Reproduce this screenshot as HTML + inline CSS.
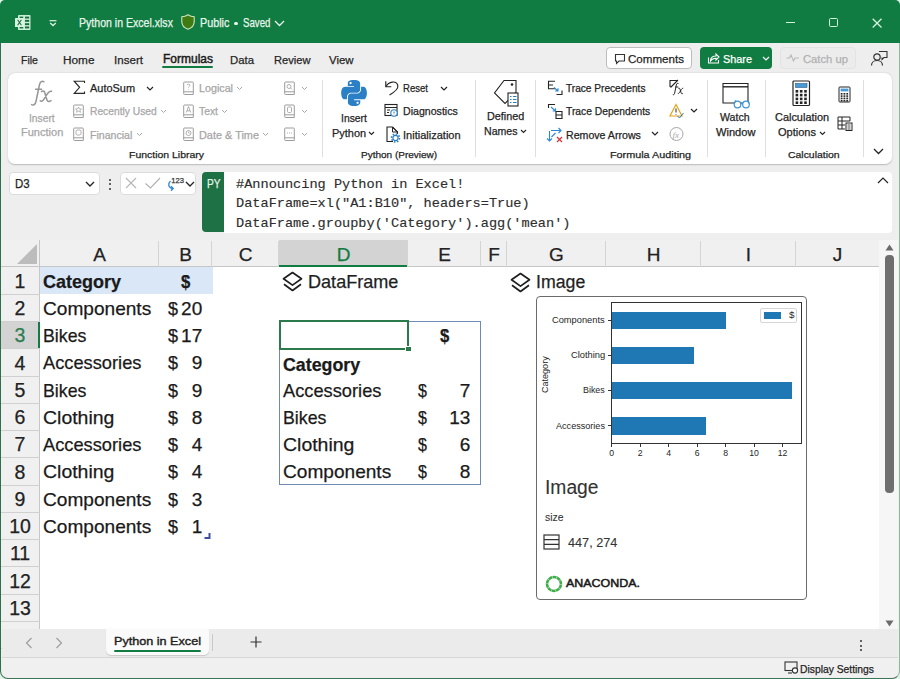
<!DOCTYPE html><html><head><meta charset="utf-8"><style>
*{margin:0;padding:0;box-sizing:border-box}
html,body{width:900px;height:679px;overflow:hidden;background:#e2f4e8;font-family:"Liberation Sans",sans-serif;color:#222}
.a{position:absolute;white-space:nowrap;-webkit-text-stroke:0.25px currentColor}
.tt{color:#e8f5ec;font-size:13px;line-height:16px}
.tab{font-size:13px;color:#242424;line-height:16px;top:51px}
.rl{font-size:12px;color:#242424;line-height:14px}
.rd{font-size:12px;color:#a6a6a6;line-height:14px}
.gl{font-size:11px;color:#242424;line-height:13px}
.c{position:absolute;font-size:19px;color:#1f1f1f;white-space:nowrap;line-height:22px}
.b{font-weight:bold}
svg{position:absolute;overflow:visible}
</style></head><body>
<div class="a" style="left:0px;top:0px;width:900px;height:679px;background:#efeeee;border-radius:5px 5px 8px 8px"></div>
<div class="a" style="left:0px;top:0px;width:900px;height:43px;background:#107c41;border-radius:5px 5px 0 0"></div>
<svg style="left:15px;top:15px" width="16" height="16" viewBox="0 0 16 16"><rect x="3" y="0" width="12.5" height="15" rx="0.8" fill="#c6efd4"/><rect x="4.6" y="1.6" width="3.6" height="1.9" fill="#1b6b42"/><rect x="10" y="1.6" width="4.2" height="1.9" fill="#1b6b42"/><rect x="4.6" y="4.9" width="3.6" height="1.9" fill="#1b6b42"/><rect x="10" y="4.9" width="4.2" height="1.9" fill="#1b6b42"/><rect x="4.6" y="8.2" width="3.6" height="1.9" fill="#1b6b42"/><rect x="10" y="8.2" width="4.2" height="1.9" fill="#1b6b42"/><rect x="4.6" y="11.499999999999998" width="3.6" height="1.9" fill="#1b6b42"/><rect x="10" y="11.499999999999998" width="4.2" height="1.9" fill="#1b6b42"/><rect x="0" y="3" width="9" height="9" rx="0.6" fill="#d9f5e2"/><path d="M2.6 4.8l3.8 5.4M6.4 4.8l-3.8 5.4" stroke="#1b6b42" stroke-width="1.1"/></svg>
<svg style="left:48.5px;top:20px" width="8" height="7" viewBox="0 0 8 7"><path d="M0.5 0.7h7" stroke="#d9f2e2" stroke-width="1.2"/><path d="M1.2 3l2.8 2.6L6.8 3" fill="none" stroke="#d9f2e2" stroke-width="1.3"/></svg>
<div class="a" style="left:79.00px;top:17.26px;font-size:12.20px;line-height:12.20px;color:#e8f5ec;transform-origin:0 0;transform:scaleX(0.8665);">Python in Excel.xlsx</div>
<svg style="left:181px;top:14px" width="14" height="16" viewBox="0 0 14 16"><path d="M7 0.8C5 2.2 3 2.8 0.8 2.8v5c0 3.8 2.6 6.2 6.2 7.4 3.6-1.2 6.2-3.6 6.2-7.4v-5C11 2.8 9 2.2 7 0.8z" fill="#3f7a12" stroke="#cfe6c0" stroke-width="1.1"/></svg>
<div class="a" style="left:199.60px;top:17.26px;font-size:12.20px;line-height:12.20px;color:#e8f5ec;transform-origin:0 0;transform:scaleX(0.8848);">Public</div>
<div class="a" style="left:234.3px;top:21.5px;width:3.4px;height:3.4px;background:#e8f5ec;border-radius:50%"></div>
<div class="a" style="left:243.00px;top:17.26px;font-size:12.20px;line-height:12.20px;color:#e8f5ec;transform-origin:0 0;transform:scaleX(0.7921);">Saved</div>
<svg style="left:274px;top:20px" width="11" height="7" viewBox="0 0 11 7"><path d="M1 1l4.5 4.5L10 1" fill="none" stroke="#e8f5ec" stroke-width="1.3"/></svg>
<div class="a" style="left:785.5px;top:21.8px;width:9.2px;height:1.3px;background:#d4f3df"></div>
<div class="a" style="left:829px;top:18.3px;width:9.4px;height:9.2px;border:1.3px solid #d4f3df;border-radius:1.5px"></div>
<svg style="left:872px;top:18px" width="10" height="10" viewBox="0 0 10 10"><path d="M0.7 0.7l8.8 8.8M9.5 0.7L0.7 9.5" stroke="#d4f3df" stroke-width="1.3"/></svg>
<div class="a" style="left:21.00px;top:53.81px;font-size:11.70px;line-height:11.70px;color:#262626;transform-origin:0 0;transform:scaleX(0.9018);">File</div>
<div class="a" style="left:62.50px;top:53.81px;font-size:11.70px;line-height:11.70px;color:#262626;transform-origin:0 0;transform:scaleX(1.0094);">Home</div>
<div class="a" style="left:113.50px;top:53.81px;font-size:11.70px;line-height:11.70px;color:#262626;transform-origin:0 0;transform:scaleX(0.9911);">Insert</div>
<div class="a" style="left:230.00px;top:53.81px;font-size:11.70px;line-height:11.70px;color:#262626;transform-origin:0 0;transform:scaleX(0.9712);">Data</div>
<div class="a" style="left:273.50px;top:53.81px;font-size:11.70px;line-height:11.70px;color:#262626;transform-origin:0 0;transform:scaleX(0.9515);">Review</div>
<div class="a" style="left:328.50px;top:53.81px;font-size:11.70px;line-height:11.70px;color:#262626;transform-origin:0 0;transform:scaleX(0.9742);">View</div>
<div class="a" style="left:162.50px;top:53.71px;font-size:11.90px;line-height:11.90px;color:#1a1a1a;transform-origin:0 0;transform:scaleX(1.0083);-webkit-text-stroke:0.45px #1a1a1a;">Formulas</div>
<div class="a" style="left:162px;top:66px;width:51px;height:2.2px;background:#107c41;border-radius:1px"></div>
<div class="a" style="left:606px;top:47px;width:86px;height:22px;background:#fff;border:1px solid #bdbdbd;border-radius:4px"></div>
<svg style="left:614px;top:53px" width="12" height="11" viewBox="0 0 12 11"><path d="M1.5 1.5h9v6.5H5L2.5 10.5V8h-1z" fill="none" stroke="#333" stroke-width="1.1"/></svg>
<div class="a" style="left:627.50px;top:52.81px;font-size:11.70px;line-height:11.70px;color:#1f1f1f;transform-origin:0 0;transform:scaleX(0.9901);">Comments</div>
<div class="a" style="left:700px;top:47px;width:72px;height:22px;background:#107c41;border-radius:4px"></div>
<svg style="left:707px;top:52px" width="13" height="12" viewBox="0 0 13 12"><path d="M1.5 5.5v5.5h10V8" fill="none" stroke="#fff" stroke-width="1.1"/><path d="M3.5 9c0-3.5 2.5-5 5.5-5V2l3 3-3 3V6.2c-2.5 0-4.5 1-5.5 2.8z" fill="none" stroke="#fff" stroke-width="1.1"/></svg>
<div class="a" style="left:722.50px;top:52.81px;font-size:11.70px;line-height:11.70px;color:#ffffff;transform-origin:0 0;transform:scaleX(0.9289);">Share</div>
<svg style="left:762px;top:56px" width="8" height="5" viewBox="0 0 8 5"><path d="M1 1l3 3 3-3" fill="none" stroke="#fff" stroke-width="1.2"/></svg>
<div class="a" style="left:780px;top:47px;width:76px;height:22px;background:#ececec;border:1px solid #e3e3e3;border-radius:4px"></div>
<svg style="left:786px;top:54px" width="14" height="8" viewBox="0 0 14 8"><path d="M0.5 4h3l1.5-3 2.5 6 1.5-3h4" fill="none" stroke="#b8b8b8" stroke-width="1.1"/></svg>
<div class="a" style="left:802.50px;top:52.81px;font-size:11.70px;line-height:11.70px;color:#b0b0b0;transform-origin:0 0;transform:scaleX(0.9610);">Catch up</div>
<svg style="left:870px;top:49px" width="18" height="18" viewBox="0 0 18 18"><circle cx="7" cy="8" r="3.2" fill="none" stroke="#333" stroke-width="1.2"/><path d="M1.5 16.5c0-3 2.5-5 5.5-5s5.5 2 5.5 5" fill="none" stroke="#333" stroke-width="1.2"/><path d="M9 2.5h8v6h-3l-2 2v-2" fill="none" stroke="#333" stroke-width="1.1"/></svg>
<div class="a" style="left:8px;top:73px;width:884px;height:91px;background:#fff;border-radius:7px;box-shadow:0 0.5px 1.5px rgba(0,0,0,.22)"></div>
<svg style="left:31px;top:80px" width="23" height="27" viewBox="0 0 23 27"><path d="M13 1.8C11 0.6 9.2 1.6 8.5 4.5L5 21.5C4.3 24.5 2.6 25.6 0.6 24.6M4.6 9.2h6" fill="none" stroke="#969696" stroke-width="1.5" stroke-linecap="round"/><path d="M10.5 11.5C12.5 10.2 13.5 11 14.3 14.5L15.8 19.5C16.5 21.8 18 22 20 20.6M20.5 11.3C19 10.8 17.5 12 15.5 15L12.8 19.3C11.8 21 10.5 21.6 9.2 20.8" fill="none" stroke="#969696" stroke-width="1.5" stroke-linecap="round"/></svg>
<div class="a" style="left:29.30px;top:112.75px;font-size:10.80px;line-height:10.80px;color:#a6a6a6;transform-origin:0 0;transform:scaleX(0.9516);">Insert</div>
<div class="a" style="left:21.00px;top:127.05px;font-size:10.80px;line-height:10.80px;color:#a6a6a6;transform-origin:0 0;transform:scaleX(1.0213);">Function</div>
<svg style="left:73px;top:80px" width="13" height="15" viewBox="0 0 13 15"><path d="M11.5 3V1.2H1.2L6.6 7.3 1.2 13.4H11.5V11.6" fill="none" stroke="#2a2a2a" stroke-width="1.15" stroke-linejoin="miter"/></svg>
<div class="a" style="left:90.00px;top:83.05px;font-size:10.80px;line-height:10.80px;color:#242424;transform-origin:0 0;transform:scaleX(1.0130);">AutoSum</div>
<svg style="left:146px;top:86px" width="8" height="5" viewBox="0 0 8 5"><path d="M1 1l3 3 3-3" fill="none" stroke="#242424" stroke-width="1.2"/></svg>
<svg style="left:73px;top:104px" width="11" height="15" viewBox="0 0 11 15"><path d="M1.5 1h8a0.8 0.8 0 0 1 .8.8V13.5H1.5a0.8 0.8 0 0 1-.8-.8V1.8a0.8 0.8 0 0 1 .8-.8z" fill="none" stroke="#9c9c9c" stroke-width="1"/><path d="M0.7 10.8h9.6" stroke="#9c9c9c" stroke-width="1"/><path d="M5.5 3l1 2h2l-1.6 1.3.6 2-2-1.2-2 1.2.6-2L2.5 5h2z" fill="none" stroke="#a6a6a6" stroke-width="0.8"/></svg>
<div class="a" style="left:90.00px;top:106.45px;font-size:10.80px;line-height:10.80px;color:#a6a6a6;transform-origin:0 0;transform:scaleX(0.9498);">Recently Used</div>
<svg style="left:160px;top:109px" width="7" height="5" viewBox="0 0 7 5"><path d="M1 1l2.5 2.5 2.5-2.5" fill="none" stroke="#a6a6a6" stroke-width="1"/></svg>
<svg style="left:73px;top:127px" width="11" height="15" viewBox="0 0 11 15"><path d="M1.5 1h8a0.8 0.8 0 0 1 .8.8V13.5H1.5a0.8 0.8 0 0 1-.8-.8V1.8a0.8 0.8 0 0 1 .8-.8z" fill="none" stroke="#9c9c9c" stroke-width="1"/><path d="M0.7 10.8h9.6" stroke="#9c9c9c" stroke-width="1"/><rect x="3" y="3" width="5" height="5" rx="1.5" fill="none" stroke="#a6a6a6" stroke-width="0.9"/></svg>
<div class="a" style="left:90.00px;top:129.75px;font-size:10.80px;line-height:10.80px;color:#a6a6a6;transform-origin:0 0;transform:scaleX(0.9787);">Financial</div>
<svg style="left:136px;top:132px" width="7" height="5" viewBox="0 0 7 5"><path d="M1 1l2.5 2.5 2.5-2.5" fill="none" stroke="#a6a6a6" stroke-width="1"/></svg>
<svg style="left:183px;top:81px" width="11" height="15" viewBox="0 0 11 15"><path d="M1.5 1h8a0.8 0.8 0 0 1 .8.8V13.5H1.5a0.8 0.8 0 0 1-.8-.8V1.8a0.8 0.8 0 0 1 .8-.8z" fill="none" stroke="#9c9c9c" stroke-width="1"/><path d="M0.7 10.8h9.6" stroke="#9c9c9c" stroke-width="1"/><path d="M4 4.2c0-1.2 3-1.2 3 0 0 1-1.5 1-1.5 2.3M5.5 8.3v.5" fill="none" stroke="#a6a6a6" stroke-width="0.9"/></svg>
<div class="a" style="left:199.30px;top:83.05px;font-size:10.80px;line-height:10.80px;color:#a6a6a6;transform-origin:0 0;transform:scaleX(0.9935);">Logical</div>
<svg style="left:236px;top:86px" width="7" height="5" viewBox="0 0 7 5"><path d="M1 1l2.5 2.5 2.5-2.5" fill="none" stroke="#a6a6a6" stroke-width="1"/></svg>
<svg style="left:183px;top:104px" width="11" height="15" viewBox="0 0 11 15"><path d="M1.5 1h8a0.8 0.8 0 0 1 .8.8V13.5H1.5a0.8 0.8 0 0 1-.8-.8V1.8a0.8 0.8 0 0 1 .8-.8z" fill="none" stroke="#9c9c9c" stroke-width="1"/><path d="M0.7 10.8h9.6" stroke="#9c9c9c" stroke-width="1"/><path d="M3.3 8.5l2.2-6 2.2 6M4 6.8h3" fill="none" stroke="#a6a6a6" stroke-width="0.9"/></svg>
<div class="a" style="left:199.30px;top:106.45px;font-size:10.80px;line-height:10.80px;color:#a6a6a6;transform-origin:0 0;transform:scaleX(0.9593);">Text</div>
<svg style="left:221px;top:109px" width="7" height="5" viewBox="0 0 7 5"><path d="M1 1l2.5 2.5 2.5-2.5" fill="none" stroke="#a6a6a6" stroke-width="1"/></svg>
<svg style="left:183px;top:127px" width="11" height="15" viewBox="0 0 11 15"><path d="M1.5 1h8a0.8 0.8 0 0 1 .8.8V13.5H1.5a0.8 0.8 0 0 1-.8-.8V1.8a0.8 0.8 0 0 1 .8-.8z" fill="none" stroke="#9c9c9c" stroke-width="1"/><path d="M0.7 10.8h9.6" stroke="#9c9c9c" stroke-width="1"/><circle cx="5.5" cy="6" r="2.5" fill="none" stroke="#a6a6a6" stroke-width="0.9"/><path d="M5.5 4.5v1.5h1" fill="none" stroke="#a6a6a6" stroke-width="0.8"/></svg>
<div class="a" style="left:199.30px;top:129.75px;font-size:10.80px;line-height:10.80px;color:#a6a6a6;transform-origin:0 0;transform:scaleX(1.0098);">Date &amp; Time</div>
<svg style="left:262px;top:132px" width="7" height="5" viewBox="0 0 7 5"><path d="M1 1l2.5 2.5 2.5-2.5" fill="none" stroke="#a6a6a6" stroke-width="1"/></svg>
<svg style="left:284px;top:81px" width="11" height="15" viewBox="0 0 11 15"><path d="M1.5 1h8a0.8 0.8 0 0 1 .8.8V13.5H1.5a0.8 0.8 0 0 1-.8-.8V1.8a0.8 0.8 0 0 1 .8-.8z" fill="none" stroke="#9c9c9c" stroke-width="1"/><path d="M0.7 10.8h9.6" stroke="#9c9c9c" stroke-width="1"/><circle cx="5" cy="5.5" r="2" fill="none" stroke="#a6a6a6" stroke-width="0.9"/><path d="M6.5 7l1.5 1.5" stroke="#a6a6a6" stroke-width="0.9"/></svg>
<svg style="left:301px;top:86px" width="7" height="5" viewBox="0 0 7 5"><path d="M1 1l2.5 2.5 2.5-2.5" fill="none" stroke="#a6a6a6" stroke-width="1"/></svg>
<svg style="left:284px;top:104px" width="11" height="15" viewBox="0 0 11 15"><path d="M1.5 1h8a0.8 0.8 0 0 1 .8.8V13.5H1.5a0.8 0.8 0 0 1-.8-.8V1.8a0.8 0.8 0 0 1 .8-.8z" fill="none" stroke="#9c9c9c" stroke-width="1"/><path d="M0.7 10.8h9.6" stroke="#9c9c9c" stroke-width="1"/><rect x="3.5" y="3" width="4" height="5.5" rx="1" fill="none" stroke="#a6a6a6" stroke-width="0.9"/></svg>
<svg style="left:301px;top:109px" width="7" height="5" viewBox="0 0 7 5"><path d="M1 1l2.5 2.5 2.5-2.5" fill="none" stroke="#a6a6a6" stroke-width="1"/></svg>
<svg style="left:284px;top:127px" width="11" height="15" viewBox="0 0 11 15"><path d="M1.5 1h8a0.8 0.8 0 0 1 .8.8V13.5H1.5a0.8 0.8 0 0 1-.8-.8V1.8a0.8 0.8 0 0 1 .8-.8z" fill="none" stroke="#9c9c9c" stroke-width="1"/><path d="M0.7 10.8h9.6" stroke="#9c9c9c" stroke-width="1"/><path d="M3 6h1M5 6h1M7 6h1" stroke="#a6a6a6" stroke-width="0.9"/></svg>
<svg style="left:301px;top:132px" width="7" height="5" viewBox="0 0 7 5"><path d="M1 1l2.5 2.5 2.5-2.5" fill="none" stroke="#a6a6a6" stroke-width="1"/></svg>
<div class="a" style="left:129.30px;top:149.93px;font-size:9.80px;line-height:9.80px;color:#242424;transform-origin:0 0;transform:scaleX(1.0675);">Function Library</div>
<div class="a" style="left:322px;top:80px;width:1px;height:77px;background:#dedede"></div>
<svg style="left:341px;top:80px" width="26" height="26" viewBox="0 0 26 26"><g transform="scale(0.236)"><path d="M54.9 0.1c-4.6 0-9 .4-12.8 1.1C30.8 3.2 28.8 7.3 28.8 15v10.1h26.3v3.4H18.9c-7.6 0-14.3 4.6-16.4 13.3-2.4 10-2.5 16.2 0 26.7 1.9 7.8 6.3 13.3 13.9 13.3h9v-12c0-8.6 7.5-16.3 16.4-16.3h26.2c7.3 0 13.1-6 13.1-13.3V15c0-7.1-6-12.5-13.1-13.7C63.5.4 59.500.1 54.9.1zM40.7 8.2c2.7 0 4.9 2.3 4.9 5s-2.2 4.9-4.9 4.9-4.9-2.2-4.9-4.9 2.2-5 4.9-5z" fill="#2b7fc4"/><path d="M85 28.6v11.700c0 9.1-7.700 16.700-16.400 16.700H42.400c-7.2 0-13.100 6.100-13.100 13.300v25c0 7.100 6.200 11.300 13.100 13.300 8.300 2.400 16.300 2.900 26.200 0 6.600-1.900 13.100-5.700 13.100-13.300V85.300H55.500v-3.300h39.300c7.600 0 10.500-5.300 13.100-13.300 2.700-8.200 2.600-16.100 0-26.700-1.900-7.600-5.500-13.300-13.100-13.300H85zM70.300 91.900c2.700 0 4.900 2.200 4.900 4.900s-2.200 5-4.900 5-4.900-2.300-4.900-5 2.200-4.900 4.900-4.900z" fill="#2b7fc4"/></g></svg>
<div class="a" style="left:341.20px;top:113.15px;font-size:10.80px;line-height:10.80px;color:#242424;transform-origin:0 0;transform:scaleX(0.9590);">Insert</div>
<div class="a" style="left:332.30px;top:128.45px;font-size:10.80px;line-height:10.80px;color:#242424;transform-origin:0 0;transform:scaleX(1.0142);">Python</div>
<svg style="left:368px;top:131px" width="7" height="5" viewBox="0 0 7 5"><path d="M1 1l2.5 2.5 2.5-2.5" fill="none" stroke="#242424" stroke-width="1.1"/></svg>
<svg style="left:384px;top:79px" width="15" height="17" viewBox="0 0 15 17"><path d="M2 7.5C4.5 2.5 12.5 1 13.8 6.5 14.5 9.5 11.5 12.5 5.5 16" fill="none" stroke="#242424" stroke-width="1.15"/><path d="M1.8 2.2v5.5h5.5" fill="none" stroke="#242424" stroke-width="1.15"/></svg>
<div class="a" style="left:403.00px;top:82.55px;font-size:10.80px;line-height:10.80px;color:#242424;transform-origin:0 0;transform:scaleX(0.8826);">Reset</div>
<svg style="left:440px;top:86px" width="8" height="5" viewBox="0 0 8 5"><path d="M1 1l3 3 3-3" fill="none" stroke="#242424" stroke-width="1.2"/></svg>
<svg style="left:384px;top:103px" width="15" height="15" viewBox="0 0 15 15"><rect x="1" y="1.5" width="12" height="11" fill="none" stroke="#242424" stroke-width="1.1"/><path d="M1 4.5h12M3 7h3M3 9.5h2" stroke="#242424" stroke-width="1"/><circle cx="10" cy="10" r="3.2" fill="#fff" stroke="#2b7fc4" stroke-width="1.1"/><path d="M10 8.5v2M10 11.5v.3" stroke="#2b7fc4" stroke-width="1"/></svg>
<div class="a" style="left:403.00px;top:106.35px;font-size:10.80px;line-height:10.80px;color:#242424;transform-origin:0 0;transform:scaleX(0.9817);">Diagnostics</div>
<svg style="left:386px;top:126px" width="14" height="17" viewBox="0 0 14 17"><path d="M6.5 1H1v14.5h6M6.5 1l5 5v2" fill="none" stroke="#242424" stroke-width="1.1"/><path d="M6.5 1v5h5z" fill="none" stroke="#242424" stroke-width="1"/><circle cx="9.5" cy="12" r="2.6" fill="none" stroke="#2b7fc4" stroke-width="1.1"/><circle cx="9.5" cy="12" r="4" fill="none" stroke="#2b7fc4" stroke-width="1.6" stroke-dasharray="1.5 1.6"/></svg>
<div class="a" style="left:403.00px;top:129.85px;font-size:10.80px;line-height:10.80px;color:#242424;transform-origin:0 0;transform:scaleX(1.0208);">Initialization</div>
<div class="a" style="left:361.00px;top:149.93px;font-size:9.80px;line-height:9.80px;color:#242424;transform-origin:0 0;transform:scaleX(1.0213);">Python (Preview)</div>
<div class="a" style="left:475px;top:80px;width:1px;height:77px;background:#dedede"></div>
<svg style="left:493px;top:79px" width="28" height="29" viewBox="0 0 28 29"><path d="M11 1.5h12v12L12 24.5 1.5 14z" fill="none" stroke="#242424" stroke-width="1.1"/><circle cx="19" cy="5.5" r="1.3" fill="#242424"/><rect x="15" y="14" width="10" height="13" fill="#fff" stroke="#242424" stroke-width="1.1"/><path d="M17 17.5h1.5M20 17.5h3.5M17 20.5h1.5M20 20.5h3.5M17 23.5h1.5M20 23.5h3.5" stroke="#2b7fc4" stroke-width="1"/></svg>
<div class="a" style="left:487.30px;top:110.65px;font-size:10.80px;line-height:10.80px;color:#242424;transform-origin:0 0;transform:scaleX(1.0021);">Defined</div>
<div class="a" style="left:483.70px;top:125.55px;font-size:10.80px;line-height:10.80px;color:#242424;transform-origin:0 0;transform:scaleX(0.9793);">Names</div>
<svg style="left:520px;top:129px" width="7" height="5" viewBox="0 0 7 5"><path d="M1 1l2.5 2.5 2.5-2.5" fill="none" stroke="#242424" stroke-width="1.1"/></svg>
<div class="a" style="left:535px;top:80px;width:1px;height:77px;background:#dedede"></div>
<svg style="left:547px;top:80px" width="17" height="17" viewBox="0 0 17 17"><path d="M8 1.2H1.5v7.5H8M1.5 5h4.5" fill="none" stroke="#242424" stroke-width="1.1"/><path d="M7 7.5l4 3.5M11 8.2v2.8H8.2" fill="none" stroke="#2b88d8" stroke-width="1.1"/><path d="M9.5 14.5h5.5V10.5" fill="none" stroke="#242424" stroke-width="1.1"/></svg>
<div class="a" style="left:565.50px;top:82.75px;font-size:10.80px;line-height:10.80px;color:#242424;transform-origin:0 0;transform:scaleX(0.9371);">Trace Precedents</div>
<svg style="left:547px;top:103px" width="17" height="17" viewBox="0 0 17 17"><path d="M1.5 5V1.5H8" fill="none" stroke="#242424" stroke-width="1.1"/><path d="M4 4l4.5 4M8.5 5.2V8H5.7" fill="none" stroke="#2b88d8" stroke-width="1.1"/><path d="M9 8.5h6v7H9zM9 12h6" fill="none" stroke="#242424" stroke-width="1.1"/></svg>
<div class="a" style="left:565.50px;top:106.35px;font-size:10.80px;line-height:10.80px;color:#242424;transform-origin:0 0;transform:scaleX(0.9520);">Trace Dependents</div>
<svg style="left:547px;top:126px" width="17" height="17" viewBox="0 0 17 17"><path d="M4 4.5h10M11.5 2l2.5 2.5-2.5 2.5M2.5 5v10M0 12.5l2.5 2.5L5 12.5M4.5 11l4-4" fill="none" stroke="#2b88d8" stroke-width="1.1"/><path d="M10 11l5 5M15 11l-5 5" stroke="#d13438" stroke-width="1.2"/></svg>
<div class="a" style="left:565.50px;top:129.85px;font-size:10.80px;line-height:10.80px;color:#242424;transform-origin:0 0;transform:scaleX(0.9827);">Remove Arrows</div>
<svg style="left:651px;top:131px" width="8" height="5" viewBox="0 0 8 5"><path d="M1 1l3 3 3-3" fill="none" stroke="#242424" stroke-width="1.2"/></svg>
<svg style="left:669px;top:79px" width="17" height="17" viewBox="0 0 17 17"><path d="M1 8V1.5h7M1.5 8.5L9 1" fill="none" stroke="#242424" stroke-width="1.1"/><path d="M9.5 4.5C8.3 4 7.6 4.6 7.3 6L5.6 14.3C5.3 15.6 4.6 16 3.8 15.6M6.2 8h3M9.2 9.3c1 -0.6 1.6 0 2 1.5l.9 3c.4 1.1 1 1.2 1.9.5M14.2 9.2c-.8 0-1.6.7-2.4 2.2l-1.3 2.2c-.5.8-1.1 1-1.7.6" fill="none" stroke="#242424" stroke-width="1"/></svg>
<svg style="left:669px;top:103px" width="16" height="16" viewBox="0 0 16 16"><path d="M7 1.5L1 13h12z" fill="none" stroke="#e8a317" stroke-width="1.2"/><path d="M7 5.5v4M7 11v.6" stroke="#242424" stroke-width="1"/><path d="M8.5 13l2 2 4-5" fill="none" stroke="#2b7fc4" stroke-width="1"/></svg>
<svg style="left:690px;top:108px" width="8" height="5" viewBox="0 0 8 5"><path d="M1 1l3 3 3-3" fill="none" stroke="#242424" stroke-width="1.2"/></svg>
<svg style="left:669px;top:126px" width="16" height="16" viewBox="0 0 16 16"><circle cx="7.5" cy="8" r="6.5" fill="none" stroke="#a6a6a6" stroke-width="1"/><text x="3.5" y="11.5" font-family="Liberation Serif" font-style="italic" font-size="9" fill="#a6a6a6">fx</text></svg>
<div class="a" style="left:610.20px;top:149.93px;font-size:9.80px;line-height:9.80px;color:#242424;transform-origin:0 0;transform:scaleX(1.1029);">Formula Auditing</div>
<div class="a" style="left:707px;top:80px;width:1px;height:77px;background:#dedede"></div>
<svg style="left:722px;top:82px" width="30" height="28" viewBox="0 0 30 28"><path d="M1 1.5h25v19.5H1z" fill="none" stroke="#242424" stroke-width="1.1"/><path d="M1 4.8h25" stroke="#242424" stroke-width="1.4"/><circle cx="15.5" cy="22.5" r="3.3" fill="#fff" stroke="#3d94d6" stroke-width="1.2"/><circle cx="24" cy="22.5" r="3.3" fill="#fff" stroke="#3d94d6" stroke-width="1.2"/><path d="M18.8 21.8h2M12.3 21.5l1.5-3.2M27.2 21.5l-1.5-3.2" fill="none" stroke="#3d94d6" stroke-width="1.1"/></svg>
<div class="a" style="left:720.40px;top:112.45px;font-size:10.80px;line-height:10.80px;color:#242424;transform-origin:0 0;transform:scaleX(0.9799);">Watch</div>
<div class="a" style="left:715.80px;top:127.05px;font-size:10.80px;line-height:10.80px;color:#242424;transform-origin:0 0;transform:scaleX(1.0284);">Window</div>
<div class="a" style="left:765px;top:80px;width:1px;height:77px;background:#dedede"></div>
<svg style="left:792px;top:80px" width="19" height="27" viewBox="0 0 19 27"><rect x="1" y="1" width="16.5" height="24.5" rx="1" fill="#fff" stroke="#242424" stroke-width="1.2"/><rect x="3.5" y="3.5" width="11.5" height="4" fill="#4a9ad8" stroke="#2a5d8a" stroke-width="0.6"/><rect x="3.6" y="10.0" width="2.6" height="2.6" fill="#242424"/><rect x="3.6" y="13.8" width="2.6" height="2.6" fill="#242424"/><rect x="3.6" y="17.6" width="2.6" height="2.6" fill="#242424"/><rect x="3.6" y="21.4" width="2.6" height="2.6" fill="#242424"/><rect x="7.9" y="10.0" width="2.6" height="2.6" fill="#242424"/><rect x="7.9" y="13.8" width="2.6" height="2.6" fill="#242424"/><rect x="7.9" y="17.6" width="2.6" height="2.6" fill="#242424"/><rect x="7.9" y="21.4" width="2.6" height="2.6" fill="#242424"/><rect x="12.2" y="10.0" width="2.6" height="2.6" fill="#242424"/><rect x="12.2" y="13.8" width="2.6" height="2.6" fill="#242424"/><rect x="12.2" y="17.6" width="2.6" height="2.6" fill="#242424"/><rect x="12.2" y="21.4" width="2.6" height="2.6" fill="#242424"/></svg>
<div class="a" style="left:774.80px;top:112.45px;font-size:10.80px;line-height:10.80px;color:#242424;transform-origin:0 0;transform:scaleX(1.0126);">Calculation</div>
<div class="a" style="left:778.40px;top:127.35px;font-size:10.80px;line-height:10.80px;color:#242424;transform-origin:0 0;transform:scaleX(1.0210);">Options</div>
<svg style="left:819px;top:131px" width="7" height="5" viewBox="0 0 7 5"><path d="M1 1l2.5 2.5 2.5-2.5" fill="none" stroke="#242424" stroke-width="1.1"/></svg>
<svg style="left:838px;top:86px" width="13" height="17" viewBox="0 0 13 17"><rect x="1" y="1" width="11" height="15" rx="0.8" fill="#fff" stroke="#242424" stroke-width="1"/><rect x="2.6" y="2.6" width="7.8" height="2.8" fill="#4a9ad8"/><rect x="2.7" y="7.0" width="1.8" height="1.6" fill="#242424"/><rect x="2.7" y="9.3" width="1.8" height="1.6" fill="#242424"/><rect x="2.7" y="11.6" width="1.8" height="1.6" fill="#242424"/><rect x="2.7" y="13.899999999999999" width="1.8" height="1.6" fill="#242424"/><rect x="5.5" y="7.0" width="1.8" height="1.6" fill="#242424"/><rect x="5.5" y="9.3" width="1.8" height="1.6" fill="#242424"/><rect x="5.5" y="11.6" width="1.8" height="1.6" fill="#242424"/><rect x="5.5" y="13.899999999999999" width="1.8" height="1.6" fill="#242424"/><rect x="8.3" y="7.0" width="1.8" height="1.6" fill="#242424"/><rect x="8.3" y="9.3" width="1.8" height="1.6" fill="#242424"/><rect x="8.3" y="11.6" width="1.8" height="1.6" fill="#242424"/><rect x="8.3" y="13.899999999999999" width="1.8" height="1.6" fill="#242424"/></svg>
<svg style="left:837px;top:116px" width="16" height="15" viewBox="0 0 16 15"><path d="M1 1h12v4H1zM1 5v8h7M1 9h7M5 1v12" fill="none" stroke="#242424" stroke-width="1"/><rect x="9" y="7" width="6" height="7.5" fill="#fff" stroke="#242424" stroke-width="1"/><path d="M10.5 9h3M10.5 11h3M10.5 13h3" stroke="#242424" stroke-width="0.8"/></svg>
<div class="a" style="left:788.00px;top:149.93px;font-size:9.80px;line-height:9.80px;color:#242424;transform-origin:0 0;transform:scaleX(1.0643);">Calculation</div>
<div class="a" style="left:863px;top:80px;width:1px;height:77px;background:#dedede"></div>
<svg style="left:873px;top:148px" width="11" height="7" viewBox="0 0 11 7"><path d="M1 1l4.5 4.5L10 1" fill="none" stroke="#242424" stroke-width="1.3"/></svg>
<div class="a" style="left:9px;top:172px;width:91px;height:23px;background:#fff;border:1px solid #dcdcdc;border-radius:4px"></div>
<div class="a" style="left:15.30px;top:177.82px;font-size:12.50px;line-height:12.50px;color:#1f1f1f;transform-origin:0 0;transform:scaleX(0.9200);">D3</div>
<svg style="left:85px;top:181px" width="10" height="6" viewBox="0 0 10 6"><path d="M1 1l4 4 4-4" fill="none" stroke="#242424" stroke-width="1.3"/></svg>
<div class="a" style="left:109.2px;top:178.5px;width:2px;height:2px;background:#333;border-radius:1px"></div>
<div class="a" style="left:109.2px;top:183px;width:2px;height:2px;background:#333;border-radius:1px"></div>
<div class="a" style="left:109.2px;top:187.5px;width:2px;height:2px;background:#333;border-radius:1px"></div>
<div class="a" style="left:120px;top:172px;width:76px;height:23px;background:#fff;border:1px solid #dcdcdc;border-radius:4px"></div>
<svg style="left:125px;top:177px" width="12" height="12" viewBox="0 0 12 12"><path d="M1 1l10 10M11 1L1 11" stroke="#b5b5b5" stroke-width="1.1"/></svg>
<svg style="left:144px;top:176px" width="18" height="14" viewBox="0 0 18 14"><path d="M1.5 7.5l5 4.5L16 2" fill="none" stroke="#b0b0b0" stroke-width="1.1"/></svg>
<svg style="left:166px;top:175px" width="18" height="18" viewBox="0 0 18 18"><path d="M4.5 6C1.8 8.5 2 12.5 6.5 13.5" fill="none" stroke="#2b88d8" stroke-width="1.3"/><path d="M5 11.2l2.2 2.3-2.2 2.3" fill="none" stroke="#2b88d8" stroke-width="1.3"/><text x="5.2" y="7.5" font-family="Liberation Sans" font-size="7.6" fill="#333" stroke="#333" stroke-width="0.25">123</text></svg>
<svg style="left:185px;top:181px" width="10" height="6" viewBox="0 0 10 6"><path d="M1 1l4 4 4-4" fill="none" stroke="#242424" stroke-width="1.3"/></svg>
<div class="a" style="left:202px;top:172px;width:30px;height:60px;background:#1e7145;border-radius:4px 0 0 4px"></div>
<div class="a" style="left:206.50px;top:177.92px;font-size:12.30px;line-height:12.30px;color:#e6f4ea;transform-origin:0 0;transform:scaleX(0.8227);">PY</div>
<div class="a" style="left:224px;top:172px;width:668px;height:61px;background:#fff;border-radius:0 4px 4px 0"></div>
<div class="a " style="left:236px;top:176.0px;font-family:'Liberation Mono',monospace;font-size:13.6px;color:#2e2e2e;line-height:18px;-webkit-text-stroke:0.15px #2e2e2e">#Announcing Python in Excel!</div>
<div class="a " style="left:236px;top:195.3px;font-family:'Liberation Mono',monospace;font-size:13.6px;color:#2e2e2e;line-height:18px;-webkit-text-stroke:0.15px #2e2e2e">DataFrame=xl(&quot;A1:B10&quot;, headers=True)</div>
<div class="a " style="left:236px;top:214.6px;font-family:'Liberation Mono',monospace;font-size:13.6px;color:#2e2e2e;line-height:18px;-webkit-text-stroke:0.15px #2e2e2e">DataFrame.groupby('Category').agg('mean')</div>
<svg style="left:877px;top:177px" width="12" height="7" viewBox="0 0 12 7"><path d="M1 6l5-5 5 5" fill="none" stroke="#242424" stroke-width="1.2"/></svg>
<div class="a" style="left:0px;top:240px;width:879px;height:389px;background:#fff"></div>
<div class="a" style="left:0px;top:240px;width:879px;height:27px;background:#f0f0f0;border-bottom:1px solid #c6c6c6"></div>
<div class="a" style="left:0px;top:240px;width:40px;height:27px;background:#f0f0f0;border-right:1px solid #c6c6c6;border-bottom:1px solid #c6c6c6"></div>
<svg style="left:16.5px;top:243.5px" width="20" height="20" viewBox="0 0 20 20"><path d="M20 0L20 20L0 20z" fill="#bcbcbc"/></svg>
<div class="a" style="left:158px;top:241px;width:1px;height:26px;background:#d4d4d4"></div>
<div class="a" style="left:99.50px;top:245.06px;font-size:19.00px;line-height:19.00px;color:#222;transform-origin:0 0;transform:scaleX(0.0000);transform:translateX(-50%);">A</div>
<div class="a" style="left:211px;top:241px;width:1px;height:26px;background:#d4d4d4"></div>
<div class="a" style="left:185.50px;top:245.06px;font-size:19.00px;line-height:19.00px;color:#222;transform-origin:0 0;transform:scaleX(0.0000);transform:translateX(-50%);">B</div>
<div class="a" style="left:278px;top:241px;width:1px;height:26px;background:#d4d4d4"></div>
<div class="a" style="left:245.50px;top:245.06px;font-size:19.00px;line-height:19.00px;color:#222;transform-origin:0 0;transform:scaleX(0.0000);transform:translateX(-50%);">C</div>
<div class="a" style="left:279px;top:240px;width:129px;height:27px;background:#d3d3d3;border-bottom:2px solid #107c41"></div>
<div class="a" style="left:407px;top:241px;width:1px;height:26px;background:#d4d4d4"></div>
<div class="a" style="left:343.50px;top:245.06px;font-size:19.00px;line-height:19.00px;color:#107c41;transform-origin:0 0;transform:scaleX(0.0000);transform:translateX(-50%);">D</div>
<div class="a" style="left:480px;top:241px;width:1px;height:26px;background:#d4d4d4"></div>
<div class="a" style="left:444.50px;top:245.06px;font-size:19.00px;line-height:19.00px;color:#222;transform-origin:0 0;transform:scaleX(0.0000);transform:translateX(-50%);">E</div>
<div class="a" style="left:506px;top:241px;width:1px;height:26px;background:#d4d4d4"></div>
<div class="a" style="left:494.00px;top:245.06px;font-size:19.00px;line-height:19.00px;color:#222;transform-origin:0 0;transform:scaleX(0.0000);transform:translateX(-50%);">F</div>
<div class="a" style="left:605px;top:241px;width:1px;height:26px;background:#d4d4d4"></div>
<div class="a" style="left:556.50px;top:245.06px;font-size:19.00px;line-height:19.00px;color:#222;transform-origin:0 0;transform:scaleX(0.0000);transform:translateX(-50%);">G</div>
<div class="a" style="left:700px;top:241px;width:1px;height:26px;background:#d4d4d4"></div>
<div class="a" style="left:653.50px;top:245.06px;font-size:19.00px;line-height:19.00px;color:#222;transform-origin:0 0;transform:scaleX(0.0000);transform:translateX(-50%);">H</div>
<div class="a" style="left:795px;top:241px;width:1px;height:26px;background:#d4d4d4"></div>
<div class="a" style="left:748.50px;top:245.06px;font-size:19.00px;line-height:19.00px;color:#222;transform-origin:0 0;transform:scaleX(0.0000);transform:translateX(-50%);">I</div>
<div class="a" style="left:837.50px;top:245.06px;font-size:19.00px;line-height:19.00px;color:#222;transform-origin:0 0;transform:scaleX(0.0000);transform:translateX(-50%);">J</div>
<div class="a" style="left:0px;top:267px;width:40px;height:362px;background:#f0f0f0;border-right:1px solid #c6c6c6"></div>
<div class="a" style="left:0px;top:293.95px;width:40px;height:1px;background:#d0d0d0"></div>
<div class="a" style="left:20.00px;top:271.94px;font-size:19.50px;line-height:19.50px;color:#222;transform-origin:0 0;transform:scaleX(0.0000);transform:translateX(-50%);text-align:center;">1</div>
<div class="a" style="left:0px;top:321.2px;width:40px;height:1px;background:#d0d0d0"></div>
<div class="a" style="left:20.00px;top:299.19px;font-size:19.50px;line-height:19.50px;color:#222;transform-origin:0 0;transform:scaleX(0.0000);transform:translateX(-50%);text-align:center;">2</div>
<div class="a" style="left:0px;top:321.5px;width:40px;height:27.25px;background:#d3d3d3;border-right:2px solid #107c41"></div>
<div class="a" style="left:0px;top:348.45px;width:40px;height:1px;background:#d0d0d0"></div>
<div class="a" style="left:20.00px;top:326.44px;font-size:19.50px;line-height:19.50px;color:#2e7d52;transform-origin:0 0;transform:scaleX(0.0000);transform:translateX(-50%);text-align:center;">3</div>
<div class="a" style="left:0px;top:375.7px;width:40px;height:1px;background:#d0d0d0"></div>
<div class="a" style="left:20.00px;top:353.69px;font-size:19.50px;line-height:19.50px;color:#222;transform-origin:0 0;transform:scaleX(0.0000);transform:translateX(-50%);text-align:center;">4</div>
<div class="a" style="left:0px;top:402.95px;width:40px;height:1px;background:#d0d0d0"></div>
<div class="a" style="left:20.00px;top:380.94px;font-size:19.50px;line-height:19.50px;color:#222;transform-origin:0 0;transform:scaleX(0.0000);transform:translateX(-50%);text-align:center;">5</div>
<div class="a" style="left:0px;top:430.2px;width:40px;height:1px;background:#d0d0d0"></div>
<div class="a" style="left:20.00px;top:408.19px;font-size:19.50px;line-height:19.50px;color:#222;transform-origin:0 0;transform:scaleX(0.0000);transform:translateX(-50%);text-align:center;">6</div>
<div class="a" style="left:0px;top:457.45px;width:40px;height:1px;background:#d0d0d0"></div>
<div class="a" style="left:20.00px;top:435.44px;font-size:19.50px;line-height:19.50px;color:#222;transform-origin:0 0;transform:scaleX(0.0000);transform:translateX(-50%);text-align:center;">7</div>
<div class="a" style="left:0px;top:484.7px;width:40px;height:1px;background:#d0d0d0"></div>
<div class="a" style="left:20.00px;top:462.69px;font-size:19.50px;line-height:19.50px;color:#222;transform-origin:0 0;transform:scaleX(0.0000);transform:translateX(-50%);text-align:center;">8</div>
<div class="a" style="left:0px;top:511.95px;width:40px;height:1px;background:#d0d0d0"></div>
<div class="a" style="left:20.00px;top:489.94px;font-size:19.50px;line-height:19.50px;color:#222;transform-origin:0 0;transform:scaleX(0.0000);transform:translateX(-50%);text-align:center;">9</div>
<div class="a" style="left:0px;top:539.2px;width:40px;height:1px;background:#d0d0d0"></div>
<div class="a" style="left:20.00px;top:517.19px;font-size:19.50px;line-height:19.50px;color:#222;transform-origin:0 0;transform:scaleX(0.0000);transform:translateX(-50%);text-align:center;">10</div>
<div class="a" style="left:0px;top:566.45px;width:40px;height:1px;background:#d0d0d0"></div>
<div class="a" style="left:20.00px;top:544.44px;font-size:19.50px;line-height:19.50px;color:#222;transform-origin:0 0;transform:scaleX(0.0000);transform:translateX(-50%);text-align:center;">11</div>
<div class="a" style="left:0px;top:593.7px;width:40px;height:1px;background:#d0d0d0"></div>
<div class="a" style="left:20.00px;top:571.69px;font-size:19.50px;line-height:19.50px;color:#222;transform-origin:0 0;transform:scaleX(0.0000);transform:translateX(-50%);text-align:center;">12</div>
<div class="a" style="left:0px;top:620.95px;width:40px;height:1px;background:#d0d0d0"></div>
<div class="a" style="left:20.00px;top:598.94px;font-size:19.50px;line-height:19.50px;color:#222;transform-origin:0 0;transform:scaleX(0.0000);transform:translateX(-50%);text-align:center;">13</div>
<div class="a" style="left:0px;top:648.2px;width:40px;height:1px;background:#d0d0d0"></div>
<div class="a" style="left:40px;top:267px;width:172.5px;height:26.75px;background:#d9e7f7"></div>
<div class="a" style="left:42.80px;top:271.72px;font-size:19.00px;line-height:19.00px;color:#1a1a1a;transform-origin:0 0;transform:scaleX(0.9460);font-weight:bold;">Category</div>
<div class="a" style="left:180.50px;top:271.72px;font-size:19.00px;line-height:19.00px;color:#1a1a1a;transform-origin:0 0;transform:scaleX(0.8802);font-weight:bold;">$</div>
<div class="a" style="left:42.80px;top:298.97px;font-size:19.00px;line-height:19.00px;color:#1a1a1a;transform-origin:0 0;transform:scaleX(1.0044);">Components</div>
<div class="a" style="left:168.00px;top:298.97px;font-size:19.00px;line-height:19.00px;color:#1a1a1a;transform-origin:0 0;transform:scaleX(0.9465);">$</div>
<div class="a" style="left:181.07px;top:298.97px;font-size:19.00px;line-height:19.00px;color:#1a1a1a;transform-origin:0 0;transform:scaleX(1.0000);">20</div>
<div class="a" style="left:42.80px;top:326.22px;font-size:19.00px;line-height:19.00px;color:#1a1a1a;transform-origin:0 0;transform:scaleX(0.9341);">Bikes</div>
<div class="a" style="left:168.00px;top:326.22px;font-size:19.00px;line-height:19.00px;color:#1a1a1a;transform-origin:0 0;transform:scaleX(0.9465);">$</div>
<div class="a" style="left:181.07px;top:326.22px;font-size:19.00px;line-height:19.00px;color:#1a1a1a;transform-origin:0 0;transform:scaleX(1.0000);">17</div>
<div class="a" style="left:42.80px;top:353.47px;font-size:19.00px;line-height:19.00px;color:#1a1a1a;transform-origin:0 0;transform:scaleX(0.9608);">Accessories</div>
<div class="a" style="left:168.00px;top:353.47px;font-size:19.00px;line-height:19.00px;color:#1a1a1a;transform-origin:0 0;transform:scaleX(0.9465);">$</div>
<div class="a" style="left:191.63px;top:353.47px;font-size:19.00px;line-height:19.00px;color:#1a1a1a;transform-origin:0 0;transform:scaleX(1.0000);">9</div>
<div class="a" style="left:42.80px;top:380.72px;font-size:19.00px;line-height:19.00px;color:#1a1a1a;transform-origin:0 0;transform:scaleX(0.9341);">Bikes</div>
<div class="a" style="left:168.00px;top:380.72px;font-size:19.00px;line-height:19.00px;color:#1a1a1a;transform-origin:0 0;transform:scaleX(0.9465);">$</div>
<div class="a" style="left:191.63px;top:380.72px;font-size:19.00px;line-height:19.00px;color:#1a1a1a;transform-origin:0 0;transform:scaleX(1.0000);">9</div>
<div class="a" style="left:42.80px;top:407.97px;font-size:19.00px;line-height:19.00px;color:#1a1a1a;transform-origin:0 0;transform:scaleX(1.0243);">Clothing</div>
<div class="a" style="left:168.00px;top:407.97px;font-size:19.00px;line-height:19.00px;color:#1a1a1a;transform-origin:0 0;transform:scaleX(0.9465);">$</div>
<div class="a" style="left:191.63px;top:407.97px;font-size:19.00px;line-height:19.00px;color:#1a1a1a;transform-origin:0 0;transform:scaleX(1.0000);">8</div>
<div class="a" style="left:42.80px;top:435.22px;font-size:19.00px;line-height:19.00px;color:#1a1a1a;transform-origin:0 0;transform:scaleX(0.9608);">Accessories</div>
<div class="a" style="left:168.00px;top:435.22px;font-size:19.00px;line-height:19.00px;color:#1a1a1a;transform-origin:0 0;transform:scaleX(0.9465);">$</div>
<div class="a" style="left:191.63px;top:435.22px;font-size:19.00px;line-height:19.00px;color:#1a1a1a;transform-origin:0 0;transform:scaleX(1.0000);">4</div>
<div class="a" style="left:42.80px;top:462.47px;font-size:19.00px;line-height:19.00px;color:#1a1a1a;transform-origin:0 0;transform:scaleX(1.0243);">Clothing</div>
<div class="a" style="left:168.00px;top:462.47px;font-size:19.00px;line-height:19.00px;color:#1a1a1a;transform-origin:0 0;transform:scaleX(0.9465);">$</div>
<div class="a" style="left:191.63px;top:462.47px;font-size:19.00px;line-height:19.00px;color:#1a1a1a;transform-origin:0 0;transform:scaleX(1.0000);">4</div>
<div class="a" style="left:42.80px;top:489.72px;font-size:19.00px;line-height:19.00px;color:#1a1a1a;transform-origin:0 0;transform:scaleX(1.0044);">Components</div>
<div class="a" style="left:168.00px;top:489.72px;font-size:19.00px;line-height:19.00px;color:#1a1a1a;transform-origin:0 0;transform:scaleX(0.9465);">$</div>
<div class="a" style="left:191.63px;top:489.72px;font-size:19.00px;line-height:19.00px;color:#1a1a1a;transform-origin:0 0;transform:scaleX(1.0000);">3</div>
<div class="a" style="left:42.80px;top:516.97px;font-size:19.00px;line-height:19.00px;color:#1a1a1a;transform-origin:0 0;transform:scaleX(1.0044);">Components</div>
<div class="a" style="left:168.00px;top:516.97px;font-size:19.00px;line-height:19.00px;color:#1a1a1a;transform-origin:0 0;transform:scaleX(0.9465);">$</div>
<div class="a" style="left:191.63px;top:516.97px;font-size:19.00px;line-height:19.00px;color:#1a1a1a;transform-origin:0 0;transform:scaleX(1.0000);">1</div>
<svg style="left:204px;top:532px" width="7" height="7" viewBox="0 0 7 7"><path d="M5.5 1v5h-5" fill="none" stroke="#3d4fa0" stroke-width="2"/></svg>
<svg style="left:282px;top:271px" width="21" height="20" viewBox="0 0 21 20"><path d="M10.5 1.5L19.5 7.8 10.5 14.1 1.5 7.8z" fill="none" stroke="#1f1f1f" stroke-width="1.7" stroke-linejoin="round"/><path d="M2 13.2l8.5 6.3 8.5-6.3" fill="none" stroke="#1f1f1f" stroke-width="1.7" stroke-linejoin="round"/></svg>
<div class="a" style="left:308.00px;top:272.90px;font-size:18.50px;line-height:18.50px;color:#1f1f1f;transform-origin:0 0;transform:scaleX(0.9771);">DataFrame</div>
<div class="a" style="left:279px;top:320.8px;width:201.5px;height:164.5px;border:1px solid #6f8bb5"></div>
<div class="a" style="left:278.5px;top:320px;width:130.5px;height:29.5px;border:2px solid #2a7a4b"></div>
<div class="a" style="left:405px;top:345.5px;width:5.5px;height:5.5px;background:#2a7a4b;border-left:1px solid #fff;border-top:1px solid #fff"></div>
<div class="a" style="left:439.50px;top:326.42px;font-size:19.00px;line-height:19.00px;color:#1a1a1a;transform-origin:0 0;transform:scaleX(0.8802);font-weight:bold;">$</div>
<div class="a" style="left:283.10px;top:354.92px;font-size:19.00px;line-height:19.00px;color:#1a1a1a;transform-origin:0 0;transform:scaleX(0.9362);font-weight:bold;">Category</div>
<div class="a" style="left:283.10px;top:380.62px;font-size:19.00px;line-height:19.00px;color:#1a1a1a;transform-origin:0 0;transform:scaleX(0.9608);">Accessories</div>
<div class="a" style="left:417.80px;top:380.62px;font-size:19.00px;line-height:19.00px;color:#1a1a1a;transform-origin:0 0;transform:scaleX(0.8423);">$</div>
<div class="a" style="left:459.83px;top:380.62px;font-size:19.00px;line-height:19.00px;color:#1a1a1a;transform-origin:0 0;transform:scaleX(1.0000);">7</div>
<div class="a" style="left:283.10px;top:407.87px;font-size:19.00px;line-height:19.00px;color:#1a1a1a;transform-origin:0 0;transform:scaleX(0.9341);">Bikes</div>
<div class="a" style="left:417.80px;top:407.87px;font-size:19.00px;line-height:19.00px;color:#1a1a1a;transform-origin:0 0;transform:scaleX(0.8423);">$</div>
<div class="a" style="left:449.27px;top:407.87px;font-size:19.00px;line-height:19.00px;color:#1a1a1a;transform-origin:0 0;transform:scaleX(1.0000);">13</div>
<div class="a" style="left:283.10px;top:435.12px;font-size:19.00px;line-height:19.00px;color:#1a1a1a;transform-origin:0 0;transform:scaleX(1.0243);">Clothing</div>
<div class="a" style="left:417.80px;top:435.12px;font-size:19.00px;line-height:19.00px;color:#1a1a1a;transform-origin:0 0;transform:scaleX(0.8423);">$</div>
<div class="a" style="left:459.83px;top:435.12px;font-size:19.00px;line-height:19.00px;color:#1a1a1a;transform-origin:0 0;transform:scaleX(1.0000);">6</div>
<div class="a" style="left:283.10px;top:462.37px;font-size:19.00px;line-height:19.00px;color:#1a1a1a;transform-origin:0 0;transform:scaleX(1.0044);">Components</div>
<div class="a" style="left:417.80px;top:462.37px;font-size:19.00px;line-height:19.00px;color:#1a1a1a;transform-origin:0 0;transform:scaleX(0.8423);">$</div>
<div class="a" style="left:459.83px;top:462.37px;font-size:19.00px;line-height:19.00px;color:#1a1a1a;transform-origin:0 0;transform:scaleX(1.0000);">8</div>
<svg style="left:510px;top:271.5px" width="21" height="20" viewBox="0 0 21 20"><path d="M10.5 1.5L19.5 7.8 10.5 14.1 1.5 7.8z" fill="none" stroke="#1f1f1f" stroke-width="1.7" stroke-linejoin="round"/><path d="M2 13.2l8.5 6.3 8.5-6.3" fill="none" stroke="#1f1f1f" stroke-width="1.7" stroke-linejoin="round"/></svg>
<div class="a" style="left:536.00px;top:272.75px;font-size:18.80px;line-height:18.80px;color:#1f1f1f;transform-origin:0 0;transform:scaleX(0.9436);">Image</div>
<div class="a" style="left:535.5px;top:295.5px;width:271px;height:304px;background:#fff;border:1.5px solid #6b6b6b;border-radius:4px"></div>
<div class="a" style="left:611.2px;top:301.9px;width:190.39999999999998px;height:141.90000000000003px;border:1px solid #333"></div>
<div class="a" style="left:611.7px;top:311.8px;width:113.86666666666663px;height:17.099999999999966px;background:#1f77b4"></div>
<div class="a" style="left:608.2px;top:319.85px;width:3.5px;height:1px;background:#333"></div>
<div class="a" style="left:552.30px;top:316.12px;font-size:8.70px;line-height:8.70px;color:#262626;transform-origin:0 0;transform:scaleX(1.0684);-webkit-text-stroke:0;">Components</div>
<div class="a" style="left:611.7px;top:346.6px;width:81.84166666666664px;height:17.099999999999966px;background:#1f77b4"></div>
<div class="a" style="left:608.2px;top:354.65px;width:3.5px;height:1px;background:#333"></div>
<div class="a" style="left:570.70px;top:350.92px;font-size:8.70px;line-height:8.70px;color:#262626;transform-origin:0 0;transform:scaleX(1.0746);-webkit-text-stroke:0;">Clothing</div>
<div class="a" style="left:611.7px;top:382px;width:180.76333333333326px;height:17px;background:#1f77b4"></div>
<div class="a" style="left:608.2px;top:390.0px;width:3.5px;height:1px;background:#333"></div>
<div class="a" style="left:583.30px;top:386.27px;font-size:8.70px;line-height:8.70px;color:#262626;transform-origin:0 0;transform:scaleX(1.0200);-webkit-text-stroke:0;">Bikes</div>
<div class="a" style="left:611.7px;top:417px;width:94.22466666666664px;height:17.69999999999999px;background:#1f77b4"></div>
<div class="a" style="left:608.2px;top:425.35px;width:3.5px;height:1px;background:#333"></div>
<div class="a" style="left:556.00px;top:421.62px;font-size:8.70px;line-height:8.70px;color:#262626;transform-origin:0 0;transform:scaleX(1.0448);-webkit-text-stroke:0;">Accessories</div>
<div class="a" style="left:611.2px;top:443.3px;width:1px;height:3.5px;background:#333"></div>
<div class="a" style="left:609.28px;top:449.37px;font-size:8.70px;line-height:8.70px;color:#262626;transform-origin:0 0;transform:scaleX(1.0000);-webkit-text-stroke:0;">0</div>
<div class="a" style="left:639.6666666666667px;top:443.3px;width:1px;height:3.5px;background:#333"></div>
<div class="a" style="left:637.75px;top:449.37px;font-size:8.70px;line-height:8.70px;color:#262626;transform-origin:0 0;transform:scaleX(1.0000);-webkit-text-stroke:0;">2</div>
<div class="a" style="left:668.1333333333333px;top:443.3px;width:1px;height:3.5px;background:#333"></div>
<div class="a" style="left:666.21px;top:449.37px;font-size:8.70px;line-height:8.70px;color:#262626;transform-origin:0 0;transform:scaleX(1.0000);-webkit-text-stroke:0;">4</div>
<div class="a" style="left:696.6px;top:443.3px;width:1px;height:3.5px;background:#333"></div>
<div class="a" style="left:694.68px;top:449.37px;font-size:8.70px;line-height:8.70px;color:#262626;transform-origin:0 0;transform:scaleX(1.0000);-webkit-text-stroke:0;">6</div>
<div class="a" style="left:725.0666666666667px;top:443.3px;width:1px;height:3.5px;background:#333"></div>
<div class="a" style="left:723.15px;top:449.37px;font-size:8.70px;line-height:8.70px;color:#262626;transform-origin:0 0;transform:scaleX(1.0000);-webkit-text-stroke:0;">8</div>
<div class="a" style="left:753.5333333333333px;top:443.3px;width:1px;height:3.5px;background:#333"></div>
<div class="a" style="left:749.20px;top:449.37px;font-size:8.70px;line-height:8.70px;color:#262626;transform-origin:0 0;transform:scaleX(1.0000);-webkit-text-stroke:0;">10</div>
<div class="a" style="left:782.0px;top:443.3px;width:1px;height:3.5px;background:#333"></div>
<div class="a" style="left:777.66px;top:449.37px;font-size:8.70px;line-height:8.70px;color:#262626;transform-origin:0 0;transform:scaleX(1.0000);-webkit-text-stroke:0;">12</div>
<div class="a" style="left:539.5px;top:392.7px;font-size:8.7px;line-height:10px;color:#262626;-webkit-text-stroke:0;transform-origin:0 0;transform:rotate(-90deg) scaleX(1.0397)">Category</div>
<div class="a" style="left:760px;top:308px;width:37px;height:14.5px;background:#fff;border:1px solid #d6d6d6;border-radius:2px"></div>
<div class="a" style="left:764px;top:312px;width:17px;height:6.5px;background:#1f77b4"></div>
<div class="a" style="left:788.50px;top:311.07px;font-size:8.70px;line-height:8.70px;color:#262626;transform-origin:0 0;transform:scaleX(1.1368);-webkit-text-stroke:0;">$</div>
<div class="a" style="left:544.50px;top:477.81px;font-size:19.50px;line-height:19.50px;color:#333;transform-origin:0 0;transform:scaleX(0.9872);-webkit-text-stroke:0.1px #333;">Image</div>
<div class="a" style="left:544.50px;top:512.41px;font-size:11.50px;line-height:11.50px;color:#333;transform-origin:0 0;transform:scaleX(0.9046);-webkit-text-stroke:0.1px #333;">size</div>
<svg style="left:543px;top:534px" width="18" height="17" viewBox="0 0 18 17"><rect x="1" y="1" width="15" height="14" fill="none" stroke="#333" stroke-width="1.2"/><path d="M1 5.7h15M1 10.3h15" stroke="#333" stroke-width="1.2"/></svg>
<div class="a" style="left:567.70px;top:536.28px;font-size:13.00px;line-height:13.00px;color:#333;transform-origin:0 0;transform:scaleX(0.9743);-webkit-text-stroke:0.1px #333;">447, 274</div>
<svg style="left:545px;top:575px" width="19" height="19" viewBox="0 0 19 19"><circle cx="9" cy="9" r="7" fill="none" stroke="#3fae49" stroke-width="2.6"/><circle cx="9" cy="9" r="7" fill="none" stroke="#fff" stroke-width="2.8" stroke-dasharray="0.6 3.8" opacity="0.7"/></svg>
<div class="a" style="left:566.00px;top:578.41px;font-size:11.50px;line-height:11.50px;color:#1a1a1a;transform-origin:0 0;transform:scaleX(1.0823);-webkit-text-stroke:0.5px #1a1a1a;">ANACONDA.</div>
<div class="a" style="left:879px;top:240px;width:19px;height:389px;background:#f6f6f6"></div>
<svg style="left:885px;top:244px" width="9" height="7" viewBox="0 0 9 7"><path d="M4.5 0.5L8.5 6.5H0.5z" fill="#6b6b6b"/></svg>
<div class="a" style="left:885.3px;top:255px;width:8.3px;height:238px;background:#6e6e6e;border-radius:4px"></div>
<svg style="left:885px;top:620px" width="9" height="7" viewBox="0 0 9 7"><path d="M0.5 0.5h8L4.5 6.5z" fill="#6b6b6b"/></svg>
<div class="a" style="left:2px;top:629px;width:896px;height:29px;background:#ebebeb;border-bottom:1px solid #d6d6d6"></div>
<svg style="left:25px;top:637px" width="8" height="12" viewBox="0 0 8 12"><path d="M6.5 1L1.5 6l5 5" fill="none" stroke="#9a9a9a" stroke-width="1.1"/></svg>
<svg style="left:55px;top:637px" width="8" height="12" viewBox="0 0 8 12"><path d="M1.5 1l5 5-5 5" fill="none" stroke="#9a9a9a" stroke-width="1.1"/></svg>
<div class="a" style="left:105.5px;top:629px;width:103.5px;height:26px;background:#fafafa;border-radius:0 0 5px 5px;box-shadow:0 0.5px 1px rgba(0,0,0,.15)"></div>
<div class="a" style="left:114.00px;top:635.76px;font-size:11.80px;line-height:11.80px;color:#1f1f1f;transform-origin:0 0;transform:scaleX(1.0697);-webkit-text-stroke:0.42px #1f1f1f;">Python in Excel</div>
<div class="a" style="left:114px;top:649.5px;width:87px;height:2px;background:#107c41;border-radius:1px"></div>
<div class="a" style="left:212px;top:634px;width:1px;height:17px;background:#c8c8c8"></div>
<svg style="left:250px;top:636px" width="12" height="12" viewBox="0 0 12 12"><path d="M6 0.5v11M0.5 6h11" stroke="#333" stroke-width="1.2"/></svg>
<div class="a" style="left:860px;top:640px;width:2px;height:2px;background:#333;border-radius:1px"></div>
<div class="a" style="left:860px;top:644.5px;width:2px;height:2px;background:#333;border-radius:1px"></div>
<div class="a" style="left:860px;top:649px;width:2px;height:2px;background:#333;border-radius:1px"></div>
<div class="a" style="left:2px;top:658px;width:896px;height:19px;background:#f0f0f0"></div>
<svg style="left:784px;top:661px" width="15" height="13" viewBox="0 0 15 13"><rect x="1" y="1" width="12" height="8.5" fill="none" stroke="#333" stroke-width="1.1"/><path d="M4 12h4" stroke="#333" stroke-width="1.1"/><circle cx="11" cy="9.5" r="2.6" fill="#fff" stroke="#333" stroke-width="1.1"/></svg>
<div class="a" style="left:800.00px;top:663.65px;font-size:11.00px;line-height:11.00px;color:#1f1f1f;transform-origin:0 0;transform:scaleX(0.9383);">Display Settings</div>
<div class="a" style="left:0;top:43px;width:900px;height:636px;border-left:1.5px solid #2f6f4f;border-right:1.5px solid #86bb9e;border-bottom:1.5px solid #3a7658;border-radius:0 0 8px 8px"></div>
</body></html>
